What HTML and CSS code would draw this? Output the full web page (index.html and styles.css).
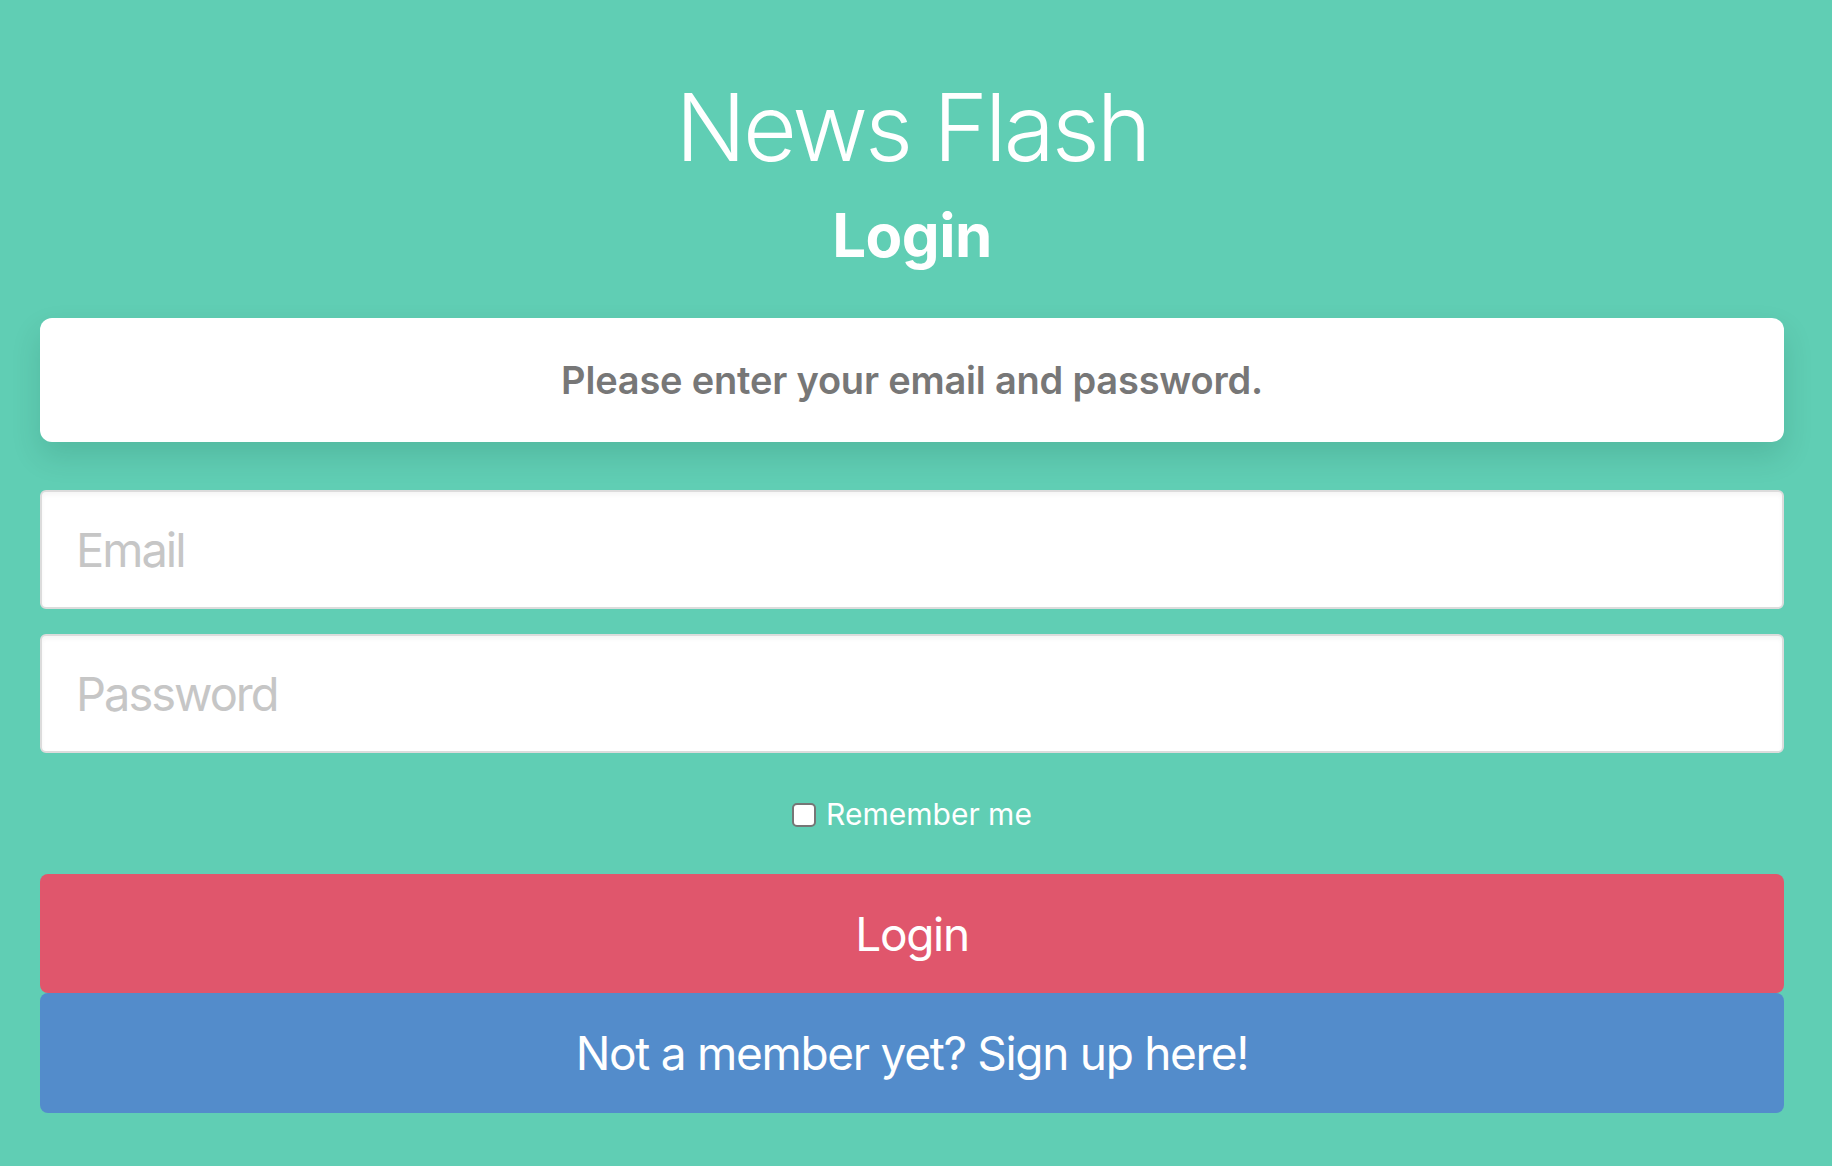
FILE: index.html
```html
<!DOCTYPE html>
<html lang="en">
<head>
<meta charset="utf-8">
<title>News Flash - Login</title>
<link rel="stylesheet" href="styles.css">
</head>
<body>
<main class="page">
  <h1 class="brand">News Flash</h1>
  <h2 class="heading">Login</h2>
  <div class="notice">Please enter your email and password.</div>
  <form class="form">
    <input class="field" type="email" placeholder="Email">
    <input class="field" type="password" placeholder="Password">
    <label class="remember"><span class="check"></span><span class="remember-text">Remember me</span></label>
    <div class="actions">
      <button type="button" class="btn btn-login">Login</button>
      <button type="button" class="btn btn-signup">Not a member yet? Sign up here!</button>
    </div>
  </form>
</main>
</body>
</html>
```
FILE: styles.css
```css
* { box-sizing: border-box; }
html, body { margin: 0; padding: 0; }
body {
  background: #60ceb4;
  font-family: Inter, "Noto Sans", "Liberation Sans", sans-serif;
  color: #fff;
  height: 1166px;
  overflow: hidden;
}
.page {
  padding: 79px 48px 0 40px;
  display: flex;
  flex-direction: column;
}
.brand {
  margin: 0;
  font-size: 93px;
  line-height: 96px;
  font-weight: 300;
  text-align: center;
  letter-spacing: -3px;
}
.heading {
  margin: 29px 0 0;
  font-size: 60px;
  line-height: 62px;
  font-weight: 700;
  text-align: center;
  letter-spacing: -0.5px;
}
.notice {
  margin-top: 52px;
  height: 124px;
  line-height: 124px;
  background: #fff;
  border-radius: 12px;
  box-shadow: 0 14px 30px rgba(0, 60, 40, 0.14);
  color: #777;
  font-size: 38px;
  font-weight: 600;
  text-align: center;
  letter-spacing: -0.2px;
}
.form {
  margin-top: 48px;
  display: flex;
  flex-direction: column;
}
.field {
  display: block;
  width: 100%;
  height: 119px;
  margin: 0 0 25px;
  padding: 0 0 0 34px;
  border: 2px solid #dcdcdc;
  border-radius: 6px;
  background: #fff;
  box-shadow: inset 0 3px 4px rgba(0, 0, 0, 0.04);
  font-family: inherit;
  font-size: 47px;
  letter-spacing: -2px;
  color: #333;
  outline: none;
}
.field::placeholder { color: #c6c6c6; }
.remember {
  margin-top: 21px;
  height: 30px;
  display: flex;
  align-items: center;
  justify-content: center;
  gap: 10px;
  font-size: 30px;
  line-height: 30px;
}
.check {
  width: 24px;
  height: 24px;
  border: 2px solid #767676;
  border-radius: 5px;
  background: #fff;
  margin-top: 2px;
}
.actions {
  margin-top: 45px;
  display: flex;
  flex-direction: column;
}
.btn {
  display: block;
  width: 100%;
  height: 119px;
  border: 0;
  border-radius: 8px;
  color: #fff;
  font-family: inherit;
  font-size: 46px;
  font-weight: 400;
  letter-spacing: -1.3px;
  cursor: pointer;
}
.btn-login { background: #e0566c; }
.btn-signup { background: #538ccb; height: 120px; }
```
